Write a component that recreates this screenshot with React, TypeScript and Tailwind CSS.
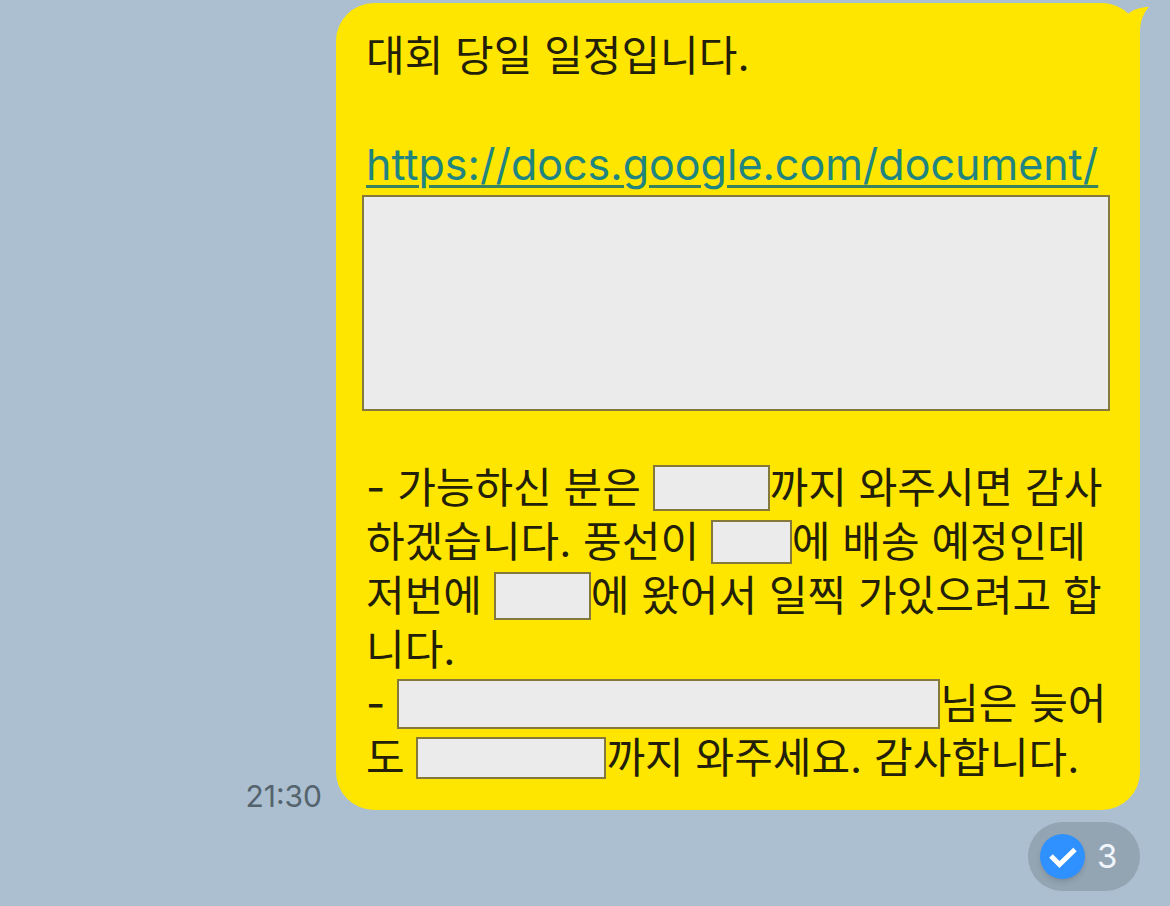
import type { ReactNode } from 'react';

function Redacted({ className }: { className: string }) {
  return <span className={`shrink-0 border-2 border-[#84793a] bg-[#ebebeb] ${className}`} aria-hidden="true" />;
}

function Line({ children }: { children?: ReactNode }) {
  return <div className="flex h-[54px] items-center px-1 whitespace-pre">{children}</div>;
}

function BubbleTail() {
  return (
    <svg className="absolute top-0 -right-[10px] h-10 w-12" viewBox="0 0 48 40" fill="#ffe600" aria-hidden="true">
      <path d="M0 0 C9 1 18 5 26 11 C32 6 39 4 47 4 C42 9 38 18 38 29 V40 H0 Z" />
    </svg>
  );
}

function Message() {
  return (
    <div className="relative w-full max-w-[804px] rounded-[38px] bg-[#ffe600] pt-[26px] pr-[30px] pb-[25px] pl-[26px] text-[42px] leading-[54px] text-[#231f08]">
      <BubbleTail />
      <Line>대회 당일 일정입니다.</Line>
      <Line />
      <Line>
        <a
          href="https://docs.google.com/document/"
          className="text-[43px] text-[#208581] underline decoration-[#39835f] decoration-3 underline-offset-[5px]"
        >
          https://docs.google.com/document/
        </a>
      </Line>
      <div className="mt-1 mb-[50px] h-[216px] border-2 border-[#84793a] bg-[#ebebeb]" />
      <Line>
        - 가능하신 분은 <Redacted className="h-[46px] w-[117px]" />까지 와주시면 감사
      </Line>
      <Line>
        하겠습니다. 풍선이 <Redacted className="h-[44px] w-[81px]" />에 배송 예정인데
      </Line>
      <Line>
        저번에 <Redacted className="h-[48px] w-[97px]" />에 왔어서 일찍 가있으려고 합
      </Line>
      <Line>니다.</Line>
      <Line>
        - <Redacted className="h-[50px] w-[543px]" />님은 늦어
      </Line>
      <Line>
        도 <Redacted className="h-[42px] w-[190px]" />까지 와주세요. 감사합니다.
      </Line>
    </div>
  );
}

export default function App() {
  return (
    <main className="min-h-screen bg-[#abbfd1] pt-[3px] pr-[30px] font-['Inter','Noto_Sans_CJK_KR',sans-serif]">
      <div className="flex items-end justify-end gap-[14px]">
        <time className="text-[30px] leading-7 text-[#55636d]">21:30</time>
        <Message />
      </div>
      <div className="mt-3 flex justify-end">
        <button className="flex h-[69px] w-28 items-center gap-3 rounded-full bg-[#93a4b2] pl-3 text-[33px] text-[#f0f5fc]">
          <span className="flex size-[45px] items-center justify-center rounded-full bg-[#2f90ff] shadow-md">
            <svg className="size-[45px]" viewBox="0 0 45 45" fill="none" stroke="white" strokeWidth="5" aria-hidden="true">
              <path d="M11 22 L19.500 30.500 L35 15.500" />
            </svg>
          </span>
          3
        </button>
      </div>
    </main>
  );
}
